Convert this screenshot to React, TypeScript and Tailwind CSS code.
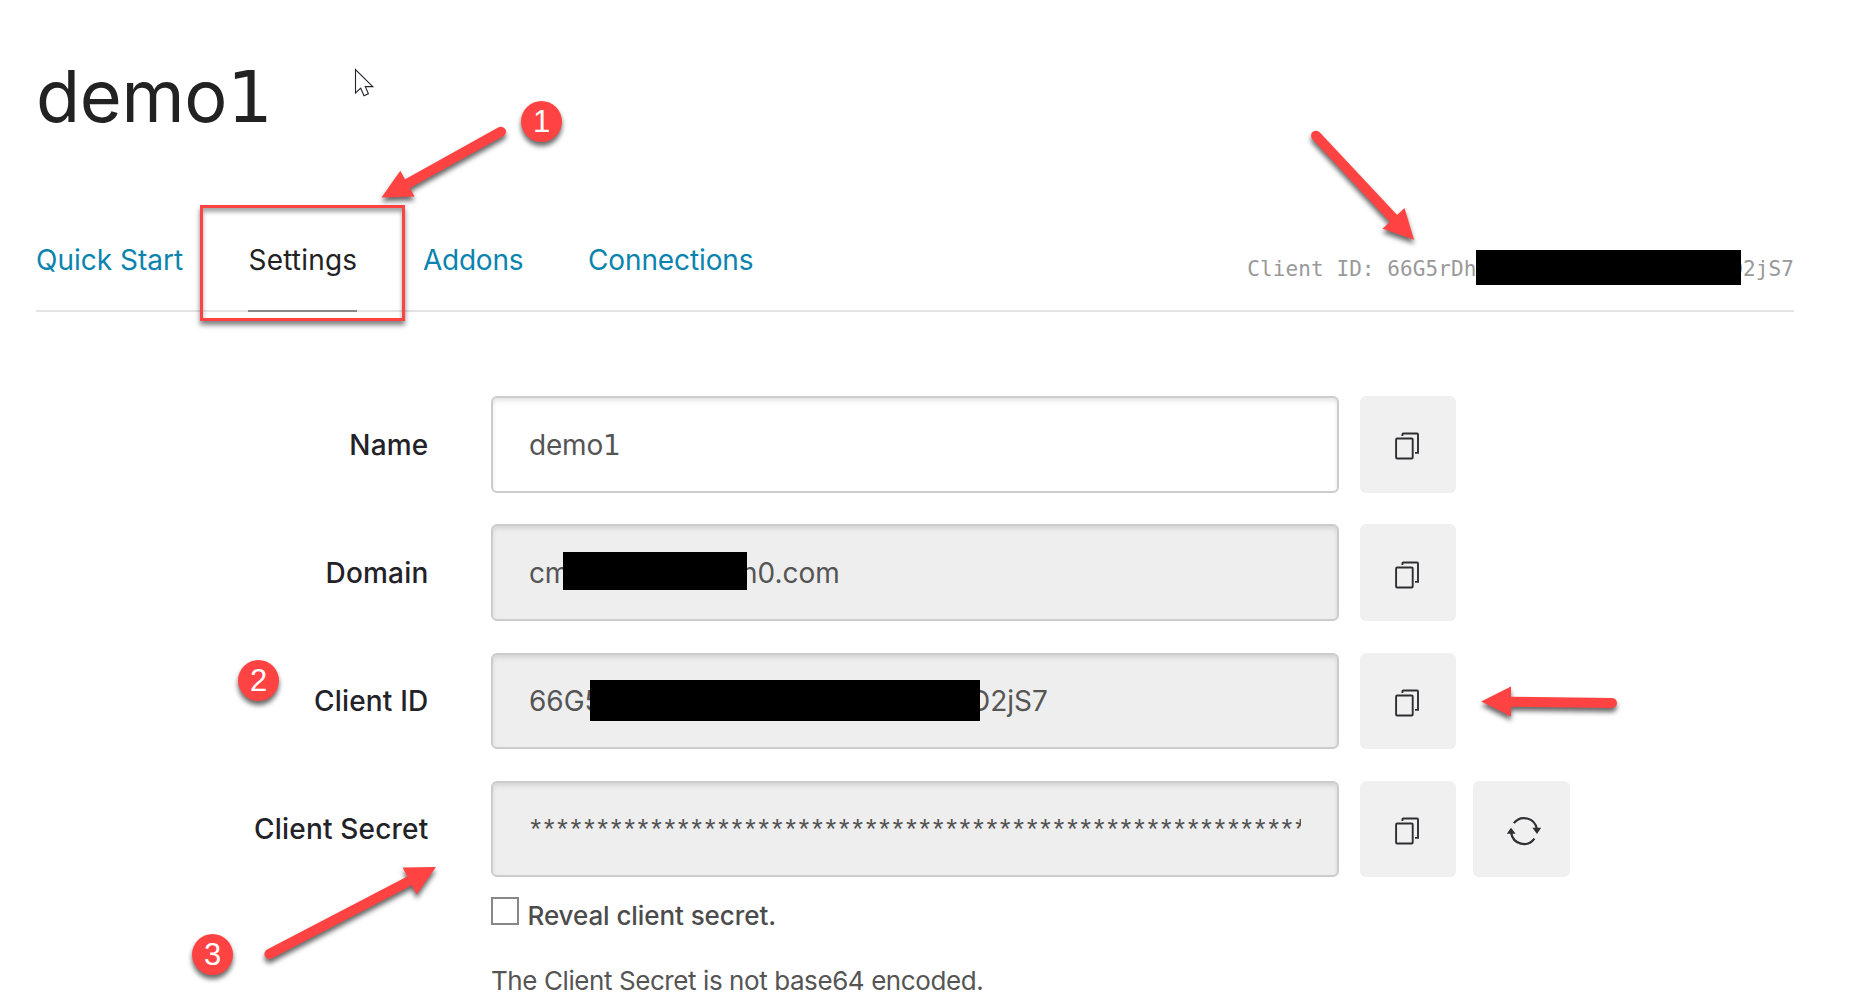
import type { ReactNode } from "react";

function One() {
  return <span className="font-['DejaVu_Sans',sans-serif] leading-none">1</span>;
}

function CopyIcon() {
  return (
    <svg viewBox="0 0 96 96" className="h-[96px] w-[96px]" fill="none" stroke="#2f2f33" strokeWidth="1.9">
      <rect x="36.1" y="42.5" width="16.6" height="20" rx="1" />
      <path d="M42.4 40.1V38.4Q42.4 37.5 43.3 37.5H57.1Q58 37.5 58 38.4V56.9H55" />
    </svg>
  );
}

function RotateIcon() {
  return (
    <svg viewBox="-51 -50 97 96" className="h-[96px] w-[97px]" fill="none" stroke="#2f2f33" strokeWidth="2.2">
      <path d="M-10.2 -7.8A12.9 12.9 0 0 1 12.8 -2" />
      <path d="M-12.8 2A12.9 12.9 0 0 0 10.4 7.6" />
      <path d="M8.4 -3.2H17.2L13 3Z M-17.2 2.8H-8.4L-13 -3.2Z" fill="#2f2f33" stroke="none" />
    </svg>
  );
}

function IconButton({ children, wide = false }: { children: ReactNode; wide?: boolean }) {
  return (
    <button
      className={
        wide
          ? "ml-[17px] flex h-full w-[97px] shrink-0 items-center justify-center rounded-md bg-[#f0f0f0]"
          : "ml-[21px] flex h-full w-[96px] shrink-0 items-center justify-center rounded-md bg-[#f0f0f0]"
      }
    >
      {children}
    </button>
  );
}

function Row({
  label,
  children,
  white = false,
  rotate = false,
}: {
  label: string;
  children: ReactNode;
  white?: boolean;
  rotate?: boolean;
}) {
  return (
    <div className="flex h-[96.5px]">
      <div className="mr-[62.5px] flex w-[428.5px] shrink-0 items-center justify-end pt-[0.9px] text-[28px] font-medium tracking-[0.2px] text-[#222228]">
        {label}
      </div>
      <div
        className={
          white
            ? "flex w-[848px] shrink-0 items-center rounded-md border-2 border-[#ccc] bg-white px-9 pt-[1.5px] text-[28px] text-[#555] shadow-[inset_0_3px_4px_rgba(0,0,0,0.1)]"
            : "flex w-[848px] shrink-0 items-center rounded-md border-2 border-[#ccc] bg-[#eee] px-9 text-[28px] text-[#555] shadow-[inset_0_3px_4px_rgba(0,0,0,0.1)]"
        }
      >
        {children}
      </div>
      <IconButton>
        <CopyIcon />
      </IconButton>
      {rotate && (
        <IconButton wide>
          <RotateIcon />
        </IconButton>
      )}
    </div>
  );
}

const arrows = [
  { shaft: "M501 131.7L408 183.4", head: "M381.5 197.6L400.3 170.8L414.5 196.6Z" },
  { shaft: "M1316 135.7L1394 219", head: "M1414 239.8L1404.5 208L1382.5 228.8Z" },
  { shaft: "M1612 703L1508 701.7", head: "M1481.2 701.4L1511 686.6V716.4Z" },
  { shaft: "M269.4 954L410 880.6", head: "M436 867L402.6 867.6L416.6 894.4Z" },
];

function Annotations() {
  return (
    <svg
      viewBox="0 0 1849 1008"
      className="pointer-events-none absolute top-0 left-0 h-[1008px] w-[1849px]"
    >
      {arrows.map((a) => (
        <g key={a.shaft} className="drop-shadow-[0_4px_2.5px_rgba(0,0,0,0.6)]">
          <path d={a.shaft} stroke="#ff4343" strokeWidth="10" strokeLinecap="round" />
          <path d={a.head} fill="#ff4343" />
        </g>
      ))}
      <path
        d="M355.5 69.5V93L360.7 88.2L364 95.7L368.4 93.8L365.3 86.6H372.8Z"
        fill="white"
        stroke="#22222e"
        strokeWidth="1.1"
      />
    </svg>
  );
}

function Badge({ n, place }: { n: number; place: string }) {
  return (
    <div
      className={`${place} absolute flex h-[41px] w-[41px] items-center justify-center rounded-full bg-[#ff4343] font-['Liberation_Sans',sans-serif] text-[31px] leading-none text-white shadow-[0_4px_5px_rgba(0,0,0,0.6)]`}
    >
      {n}
    </div>
  );
}

export default function App() {
  return (
    <div className="relative h-[1008px] w-[1849px] overflow-hidden bg-white font-['Inter',sans-serif]">
      <h1 className="pt-[54px] pl-[36px] text-[72px] leading-[84px] tracking-[-0.3px] text-[#222]">
        demo
        <One />
      </h1>

      <div className="mr-[55px] ml-[36px] flex h-[174px] items-end justify-between border-b-2 border-[#e3e3e3]">
        <nav className="-mb-[2px] flex gap-[66px] text-[28px] leading-[36px] text-[#0a84ae]">
          <a className="w-[146px] pb-[34px] whitespace-nowrap">Quick Start</a>
          <a className="w-[109px] border-b-2 border-[#888] pb-[32px] pl-[0.5px] tracking-[0.2px] whitespace-nowrap text-[#222]">
            Settings
          </a>
          <a className="w-[99px] pb-[34px] tracking-[-0.25px] whitespace-nowrap">Addons</a>
          <a className="pb-[34px] tracking-[-0.12px] whitespace-nowrap">Connections</a>
        </nav>
        <div className="mb-[25px] flex h-[35px] items-center font-['DejaVu_Sans_Mono',monospace] text-[21px] tracking-[0.08px] whitespace-pre text-[#999]">
          <span className="pt-[4px]">Client ID: 66G5rDh</span>
          <span className="z-10 -mr-[11px] h-full w-[265px] bg-black" />
          <span className="pt-[4px]">D2jS7</span>
        </div>
      </div>

      <div className="mt-[84.2px] flex flex-col gap-[31.7px]">
        <Row label="Name" white>
          <span className="tracking-[-0.2px]">
            demo
            <One />
          </span>
        </Row>
        <Row label="Domain">
          <span className="w-[34px] tracking-[-0.2px] whitespace-nowrap">cm</span>
          <span className="z-10 -mt-[3px] -mr-[6px] h-[38px] w-[184px] bg-black" />
          <span>n0.com</span>
        </Row>
        <Row label="Client ID">
          <span className="w-[61px] whitespace-nowrap">66G5</span>
          <span className="z-10 -mt-[1px] -mr-[10px] h-[41px] w-[390px] bg-black" />
          <span>D2jS7</span>
        </Row>
        <Row label="Client Secret" rotate>
          <span className="block w-[773px] overflow-hidden pb-[3px] pl-[1.5px] font-['Roboto',sans-serif] text-[24px] tracking-[3.08px] whitespace-nowrap">
            {"*".repeat(58)}
          </span>
        </Row>
      </div>

      <label className="mt-[20px] ml-[491px] flex h-[40px] items-start">
        <span className="h-[28px] w-[28px] border-2 border-[#888] bg-white" />
        <span className="mt-[1px] ml-[8.5px] text-[26px] leading-[36px] font-medium tracking-[-0.08px] text-[#4c4c4c]">
          Reveal client secret.
        </span>
      </label>
      <p className="mt-[26px] ml-[491px] text-[26px] leading-[36px] tracking-[-0.42px] text-[#555]">
        The Client Secret is not base64 encoded.
      </p>

      <div className="absolute top-[205px] left-[200px] h-[116px] w-[205px] border-3 border-[#ff4343] shadow-[0_4px_5px_rgba(0,0,0,0.5),inset_0_4px_4px_rgba(0,0,0,0.35)]" />
      <Badge n={1} place="top-[101px] left-[521px]" />
      <Badge n={2} place="top-[660px] left-[238px]" />
      <Badge n={3} place="top-[934px] left-[192px]" />
      <Annotations />
    </div>
  );
}
